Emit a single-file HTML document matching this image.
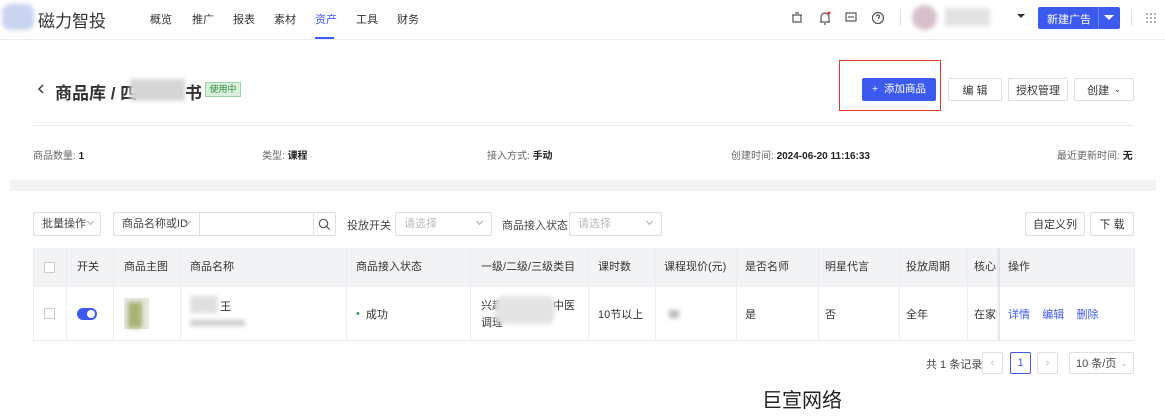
<!DOCTYPE html>
<html><head><meta charset="utf-8"><style>
*{margin:0;padding:0;box-sizing:border-box}
body{width:1165px;height:420px;overflow:hidden;background:#fff;font-family:"Liberation Sans","Noto Sans CJK SC",sans-serif;color:#333;position:relative;font-size:11px}
.a{position:absolute;white-space:nowrap}
.btn{position:absolute;border:1px solid #dcdfe6;border-radius:2px;background:#fff;font-size:11px;color:#333;display:flex;align-items:center;justify-content:center}
.blur{position:absolute;background:#ddd;filter:blur(2px)}
.th{position:absolute;top:248px;height:39px;line-height:39px;font-size:11px;color:#333}
.td{position:absolute;top:287px;height:53px;display:flex;align-items:center;font-size:11px;color:#333;white-space:nowrap}
.vl{position:absolute;width:1px;background:#ebedf0}
.sel{position:absolute;border:1px solid #dcdfe6;border-radius:2px;height:24px;top:212px;font-size:11px;line-height:22px;padding-left:8px;color:#bbb}
.chev{position:absolute;width:5px;height:5px;border-right:1px solid #aaa;border-bottom:1px solid #aaa;transform:rotate(45deg)}
</style></head><body>
<div class="a" style="left:0;top:39px;width:1165px;height:1px;background:#eceef2"></div>
<div class="blur" style="left:2px;top:4px;width:32px;height:26px;background:#c8d4f0;border-radius:8px"></div>
<div class="a" style="left:38px;top:7px;font-size:17px;color:#333">磁力智投</div>
<div class="a" style="left:150px;top:11px;font-size:11px;color:#333">概览</div>
<div class="a" style="left:192px;top:11px;font-size:11px;color:#333">推广</div>
<div class="a" style="left:233px;top:11px;font-size:11px;color:#333">报表</div>
<div class="a" style="left:274px;top:11px;font-size:11px;color:#333">素材</div>
<div class="a" style="left:315px;top:11px;font-size:11px;color:#3d5afe">资产</div>
<div class="a" style="left:315px;top:37px;width:19px;height:2px;background:#3d5afe"></div>
<div class="a" style="left:356px;top:11px;font-size:11px;color:#333">工具</div>
<div class="a" style="left:397px;top:11px;font-size:11px;color:#333">财务</div>
<svg class="a" style="left:790px;top:10px" width="100" height="16" viewBox="0 0 100 16" fill="none" stroke="#555" stroke-width="1.2">
<path d="M2 5h10M3 5v7h8V5M5 3h4"/>
<path d="M30 12h10M31 12V7a4 4 0 0 1 8 0v5M34 14h2"/><circle cx="39" cy="3" r="1.5" fill="#e33" stroke="none"/>
<rect x="56" y="3" width="10" height="8"/><path d="M58 7h6"/>
<circle cx="88" cy="8" r="5.5"/><path d="M86.5 6.5a1.5 1.5 0 1 1 2 1.4V9M88 10.5v.5"/>
</svg>
<div class="a" style="left:900px;top:10px;width:1px;height:16px;background:#ddd"></div>
<div class="blur" style="left:912px;top:5px;width:25px;height:25px;border-radius:50%;background:#d7c0cc"></div>
<div class="blur" style="left:945px;top:8px;width:45px;height:18px;background:#e2e2e2"></div>
<div class="a" style="left:1017px;top:14px;border:4px solid transparent;border-top:4px solid #333"></div>
<div class="a" style="left:1038px;top:7px;width:82px;height:22px;background:#3d5aee;border-radius:2px"></div>
<div class="a" style="left:1047px;top:11px;color:#fff;font-size:11px">新建广告</div>
<div class="a" style="left:1098px;top:7px;width:1px;height:22px;background:#6d83f3"></div>
<div class="a" style="left:1104px;top:15px;border:5px solid transparent;border-top:5px solid #fff"></div>
<div class="a" style="left:1131px;top:10px;width:1px;height:16px;background:#ddd"></div>
<svg class="a" style="left:1146px;top:13px" width="10" height="10"><g fill="#555"><circle cx="1" cy="1" r=".8"/><circle cx="5" cy="1" r=".8"/><circle cx="9" cy="1" r=".8"/><circle cx="1" cy="5" r=".8"/><circle cx="5" cy="5" r=".8"/><circle cx="9" cy="5" r=".8"/><circle cx="1" cy="9" r=".8"/><circle cx="5" cy="9" r=".8"/><circle cx="9" cy="9" r=".8"/></g></svg>
<svg class="a" style="left:37px;top:84px" width="8" height="10" fill="none" stroke="#333" stroke-width="1.4"><path d="M6 1L2 5l4 4"/></svg>
<div class="a" style="left:55px;top:79px;font-size:17px;font-weight:bold;color:#333">商品库 / 四</div>
<div class="blur" style="left:130px;top:79px;width:55px;height:22px;background:#d6d6d6"></div>
<div class="a" style="left:185px;top:79px;font-size:17px;font-weight:bold;color:#333">书</div>
<div class="a" style="left:205px;top:82px;width:36px;height:15px;background:#d9f0dc;border:1px solid #9cd4a5;color:#2d8a3e;font-size:9px;line-height:13px;text-align:center">使用中</div>
<div class="a" style="left:839px;top:60px;width:102px;height:51px;border:1.5px solid #e53a25"></div>
<div class="a" style="left:862px;top:78px;width:74px;height:23px;background:#3d5aee;border-radius:2px;color:#fff;font-size:10.5px;line-height:23px;text-align:center">+&nbsp; 添加商品</div>
<div class="btn" style="left:948px;top:78px;width:54px;height:23px">编 辑</div>
<div class="btn" style="left:1008px;top:78px;width:60px;height:23px">授权管理</div>
<div class="btn" style="left:1074px;top:78px;width:60px;height:23px">创建 <span style="font-size:8px;margin-left:5px">⌄</span></div>
<div class="a" style="left:33px;top:125px;width:1101px;height:1px;background:#e8eaee"></div>
<div class="a" style="left:33px;top:147px;font-size:10px;color:#666">商品数量: <b style="color:#222">1</b></div>
<div class="a" style="left:262px;top:147px;font-size:10px;color:#666">类型: <b style="color:#222">课程</b></div>
<div class="a" style="left:487px;top:147px;font-size:10px;color:#666">接入方式: <b style="color:#222">手动</b></div>
<div class="a" style="left:731px;top:147px;font-size:10px;color:#666">创建时间: <b style="color:#222">2024-06-20 11:16:33</b></div>
<div class="a" style="left:1057px;top:147px;font-size:10px;color:#666">最近更新时间: <b style="color:#222">无</b></div>
<div class="a" style="left:10px;top:180px;width:1146px;height:11px;background:#f2f3f5"></div>
<div class="sel" style="left:33px;width:68px;color:#444">批量操作</div><div class="chev" style="left:88px;top:219px"></div>
<div class="sel" style="left:113px;width:223px;color:#444">商品名称或ID</div><div class="chev" style="left:185px;top:219px"></div>
<div class="a" style="left:199px;top:212px;width:1px;height:24px;background:#dcdfe6"></div>
<div class="a" style="left:313px;top:212px;width:1px;height:24px;background:#dcdfe6"></div>
<svg class="a" style="left:318px;top:218px" width="13" height="13" fill="none" stroke="#555" stroke-width="1.2"><circle cx="5.5" cy="5.5" r="4.2"/><path d="M8.6 8.6l3 3"/></svg>
<div class="a" style="left:347px;top:217px;font-size:11px;color:#444">投放开关</div>
<div class="sel" style="left:395px;width:97px">请选择</div><div class="chev" style="left:477px;top:219px"></div>
<div class="a" style="left:502px;top:217px;font-size:11px;color:#444">商品接入状态</div>
<div class="sel" style="left:569px;width:93px">请选择</div><div class="chev" style="left:647px;top:219px"></div>
<div class="btn" style="left:1025px;top:212px;width:60px;height:24px">自定义列</div>
<div class="btn" style="left:1090px;top:212px;width:44px;height:24px">下 载</div>
<div class="a" style="left:33px;top:248px;width:1101px;height:39px;background:#f2f3f5"></div>
<div class="a" style="left:33px;top:340px;width:1101px;height:1px;background:#e8eaee"></div>
<div class="a" style="left:33px;top:248px;width:1px;height:92px;background:#ebedf0"></div>
<div class="a" style="left:1134px;top:248px;width:1px;height:92px;background:#ebedf0"></div>
<div class="vl" style="left:66px;top:248px;height:92px"></div>
<div class="vl" style="left:113px;top:248px;height:92px"></div>
<div class="vl" style="left:180px;top:248px;height:92px"></div>
<div class="vl" style="left:346px;top:248px;height:92px"></div>
<div class="vl" style="left:470px;top:248px;height:92px"></div>
<div class="vl" style="left:588px;top:248px;height:92px"></div>
<div class="vl" style="left:655px;top:248px;height:92px"></div>
<div class="vl" style="left:736px;top:248px;height:92px"></div>
<div class="vl" style="left:818px;top:248px;height:92px"></div>
<div class="vl" style="left:899px;top:248px;height:92px"></div>
<div class="vl" style="left:967px;top:248px;height:92px"></div>
<div class="a" style="left:996px;top:248px;width:3px;height:92px;background:linear-gradient(to right,#fff0,#0001)"></div>
<div class="a" style="left:999px;top:248px;width:1px;height:92px;background:#e0e2e6"></div>
<div class="a" style="left:44px;top:262px;width:11px;height:11px;border:1px solid #ccc;background:#fff"></div>
<div class="th" style="left:77px">开关</div>
<div class="th" style="left:124px">商品主图</div>
<div class="th" style="left:190px">商品名称</div>
<div class="th" style="left:356px">商品接入状态</div>
<div class="th" style="left:481px">一级/二级/三级类目</div>
<div class="th" style="left:598px">课时数</div>
<div class="th" style="left:664px">课程现价(元)</div>
<div class="th" style="left:745px">是否名师</div>
<div class="th" style="left:825px">明星代言</div>
<div class="th" style="left:906px">投放周期</div>
<div class="th" style="left:974px">核心</div>
<div class="th" style="left:1008px">操作</div>
<div class="a" style="left:44px;top:308px;width:11px;height:11px;border:1px solid #ccc"></div>
<div class="a" style="left:77px;top:308px;width:20px;height:12px;border-radius:6px;background:#3d5aee"></div>
<div class="a" style="left:87px;top:310px;width:8px;height:8px;border-radius:50%;background:#fff"></div>
<div class="a" style="left:124px;top:298px;width:25px;height:31px;background:#e5e8df"></div>
<div class="blur" style="left:128px;top:302px;width:14px;height:26px;background:#a9b277"></div>
<div class="blur" style="left:190px;top:296px;width:28px;height:17px;background:#e0e0e0"></div>
<div class="a" style="left:220px;top:298px;font-size:11px">王</div>
<div class="blur" style="left:190px;top:320px;width:55px;height:6px;background:#ccc"></div>
<div class="td" style="left:356px"><span style="color:#2aa14b;margin-right:6px">•</span>成功</div>
<div class="a" style="left:481px;top:298px;font-size:11px;line-height:17px">兴趣<span style="margin-left:50px">中医</span><br>调理</div>
<div class="blur" style="left:495px;top:296px;width:60px;height:28px;background:#e4e4e4;border-radius:8px"></div>
<div class="td" style="left:598px">10节以上</div>
<div class="blur" style="left:669px;top:310px;width:10px;height:8px;background:#bbb"></div>
<div class="td" style="left:745px">是</div>
<div class="td" style="left:825px">否</div>
<div class="td" style="left:906px">全年</div>
<div class="td" style="left:974px;width:23px;overflow:hidden">在家学</div>
<div class="td" style="left:1008px;color:#3d5aee">详情&nbsp;&nbsp;&nbsp;&nbsp;编辑&nbsp;&nbsp;&nbsp;&nbsp;删除</div>
<div class="a" style="left:926px;top:356px;font-size:11px;color:#444">共 1 条记录</div>
<div class="btn" style="left:982px;top:352px;width:21px;height:22px;color:#bbb">‹</div>
<div class="btn" style="left:1010px;top:352px;width:21px;height:22px;border-color:#3d5aee;color:#3d5aee">1</div>
<div class="btn" style="left:1037px;top:352px;width:21px;height:22px;color:#bbb">›</div>
<div class="btn" style="left:1069px;top:352px;width:65px;height:22px;color:#444">10 条/页 <span style="font-size:8px;color:#aaa;margin-left:4px">⌄</span></div>
<div class="a" style="left:762px;top:384px;font-size:20px;color:#222">巨宣网络</div>
</body></html>
